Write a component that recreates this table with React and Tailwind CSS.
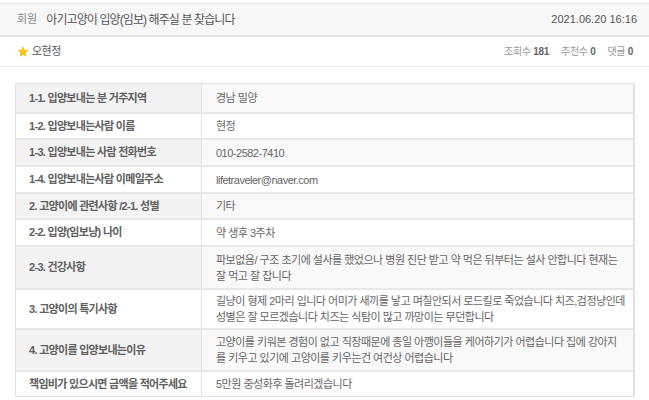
import React from "react";

const rows = [
  ["1-1. 입양보내는 분 거주지역", ["경남 밀양"], 28],
  ["1-2. 입양보내는사람 이름", ["현정"], 26],
  ["1-3. 입양보내는 사람 전화번호", ["010-2582-7410"], 27],
  ["1-4. 입양보내는사람 이메일주소", ["lifetraveler@naver.com"], 27],
  ["2. 고양이에 관련사항 /2-1. 성별", ["기타"], 26],
  ["2-2. 입양(임보냥) 나이", ["약 생후 3주차"], 27],
  ["2-3. 건강사항", ["파보없음/ 구조 초기에 설사를 했었으나 병원 진단 받고 약 먹은 뒤부터는 설사 안합니다 현재는", "잘 먹고 잘 잡니다"], 43],
  ["3. 고양이의 특기사항", ["길냥이 형제 2마리 입니다 어미가 새끼를 낳고 며칠안되서 로드킬로 죽었습니다 치즈,검정냥인데", "성별은 잘 모르겠습니다 치즈는 식탐이 많고 까망이는 무던합니다"], 40],
  ["4. 고양이를 입양보내는이유", ["고양이를 키워본 경험이 없고 직장때문에 종일 아깽이들을 케어하기가 어렵습니다 집에 강아지", "를 키우고 있기에 고양이를 키우는건 여건상 어렵습니다"], 42],
  ["책임비가 있으시면 금액을 적어주세요", ["5만원 중성화후 돌려리겠습니다"], 26],
];

const latin = { fontFamily: '"Liberation Sans", Arial, sans-serif' };

export default function App() {
  return (
    <div
      className="w-[649px] h-[400px] bg-white pt-[3px] overflow-hidden text-[12px] text-[#555]"
      style={{ fontFamily: '"Liberation Sans", "Noto Sans CJK KR", sans-serif' }}
    >
      <div className="h-[34px] bg-[#f8f8f8] border-t border-b-2 border-[#e4e4e4] flex items-center justify-between pl-[17px] pr-[12px]">
        <div className="flex items-center">
          <span className="text-[11px] text-[#888] mr-[9px]">회원</span>
          <span className="text-[#555] tracking-[-0.9px]">아기고양이 입양(임보) 해주실 분 찾습니다</span>
        </div>
        <span className="text-[#555] text-[11px]" style={latin}>2021.06.20 16:16</span>
      </div>
      <div className="h-[30px] border-b border-[#ececec] flex items-center justify-between pl-[17px] pr-[16px]">
        <div className="flex items-center gap-[3px]">
          <svg width="12" height="11" viewBox="0 0 24 23">
            <path d="M12 0l3.5 7.6 8.3.9-6.2 5.6 1.8 8.2L12 18.1l-7.4 4.2 1.8-8.2L.2 8.5l8.3-.9z" fill="#f5c518" />
          </svg>
          <span className="text-[11px] text-[#555] tracking-[-0.5px]">오현정</span>
        </div>
        <div className="flex items-center gap-[12px] text-[10px] text-[#999] tracking-[-0.3px]">
          <span>조회수 <b className="text-[#666]" style={latin}>181</b></span>
          <span>추천수 <b className="text-[#666]" style={latin}>0</b></span>
          <span>댓글 <b className="text-[#666]" style={latin}>0</b></span>
        </div>
      </div>
      <div className="ml-[15px] mt-[16px] w-[620px] border border-[#e2e2e2] border-r-2 text-[11px]">
        {rows.map(([label, val, h], i) => (
          <div
            key={i}
            className={`flex ${i > 0 ? "border-t-2 border-[#e8e8e8]" : ""} ${i % 2 === 0 ? "bg-[#f9f9f9]" : "bg-white"}`}
            style={{ height: h }}
          >
            <div className={`w-[186px] shrink-0 flex items-center pl-[13px] font-bold text-[#606060] tracking-[-0.7px] whitespace-nowrap border-r border-[#e2e2e2] ${i % 2 === 0 ? "bg-[#f3f3f3]" : "bg-white"}`}>
              {label}
            </div>
            <div className="flex-1 flex flex-col justify-center pl-[14px] text-[#666] tracking-[-0.5px] leading-[16px]">
              {val.map((v, j) => (
                <div key={j} className="whitespace-nowrap">{v}</div>
              ))}
            </div>
          </div>
        ))}
      </div>
    </div>
  );
}
